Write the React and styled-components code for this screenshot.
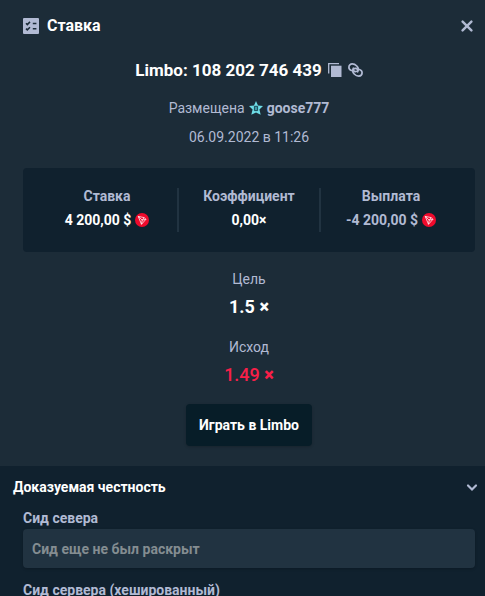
import React from "react";
import styled, { createGlobalStyle, css } from "styled-components";

const color = {
  page: "#1c2c38",
  dark: "#10212e",
  field: "#213341",
  button: "#071d28",
  muted: "#b1bad3",
  white: "#ffffff",
  red: "#f91f48",
};

const GlobalStyle = createGlobalStyle`
  *, *::before, *::after { box-sizing: border-box; }
  body {
    margin: 0;
    background: ${color.page};
    color: ${color.muted};
    font-family: Roboto, "Noto Sans", sans-serif;
    font-size: 14px;
    line-height: 20px;
  }
  button, input { font: inherit; }
  h1, h2, p, dl, dd { margin: 0; }
`;

const Modal = styled.main`
  display: flex;
  flex-direction: column;
  height: 100vh;
  overflow-y: auto;
  scrollbar-width: none;
`;

const Header = styled.header`
  display: flex;
  align-items: center;
  gap: 8px;
  padding: 14px 12px 14px 23px;
  flex-shrink: 0;
`;

const Title = styled.h1`
  flex: 1;
  font-size: 16px;
  line-height: 24px;
  font-weight: 700;
  color: ${color.white};
`;

const IconButton = styled.button`
  display: inline-flex;
  padding: 0;
  border: 0;
  background: none;
  color: ${color.muted};
  cursor: pointer;
`;

const Body = styled.section`
  display: flex;
  flex-direction: column;
  align-items: center;
  flex-shrink: 0;
  padding: 6px 10px 20px 23px;
`;

const BetId = styled.h2`
  display: flex;
  align-items: center;
  gap: 6px;
  font-size: 17px;
  line-height: 24px;
  font-weight: 700;
  color: ${color.white};
`;

const Placed = styled.p`
  display: flex;
  align-items: center;
  gap: 4px;
  margin-top: 16px;
`;

const UserLink = styled.a`
  color: ${color.muted};
  font-weight: 700;
  text-decoration: none;
`;

const Time = styled.time`
  margin-top: 9px;
`;

const Stats = styled.dl`
  display: grid;
  grid-template-columns: repeat(3, 1fr);
  align-self: stretch;
  margin-top: 21px;
  padding: 20px 13px;
  border-radius: 4px;
  background: ${color.dark};
`;

const Stat = styled.div`
  display: flex;
  flex-direction: column;
  align-items: center;
  gap: 8px;
  min-height: 44px;
  line-height: 16px;
  font-weight: 700;
  & + & {
    box-shadow: -1px 0 ${color.field}, inset 1px 0 ${color.field};
  }
`;

const StatValue = styled.dd`
  display: flex;
  align-items: center;
  gap: 4px;
  color: ${(p) => (p.$muted ? color.muted : color.white)};
`;

const Results = styled.dl`
  display: flex;
  flex-direction: column;
  gap: 18px;
  margin-top: 17px;
  text-align: center;
`;

const ResultValue = styled.dd`
  margin-top: 6px;
  font-size: 18px;
  line-height: 24px;
  font-weight: ${(p) => (p.$loss ? 500 : 700)};
  color: ${(p) => (p.$loss ? color.red : color.white)};
`;

const Times = styled.span`
  font-weight: 900;
`;

const PlayButton = styled.button`
  margin-top: 17px;
  padding: 11px 13px;
  border: 0;
  border-radius: 4px;
  background: ${color.button};
  color: ${color.white};
  font-weight: 700;
  box-shadow: 0 1px 3px rgba(0, 0, 0, 0.2);
  cursor: pointer;
`;

const Fairness = styled.section`
  flex: 1 0 auto;
  background: ${color.dark};
`;

const FairnessToggle = styled.button`
  display: flex;
  align-items: center;
  justify-content: space-between;
  width: 100%;
  padding: 11px 6px 11px 13px;
  border: 0;
  background: none;
  color: ${color.white};
  font-weight: 700;
  cursor: pointer;
`;

const Fields = styled.div`
  display: flex;
  flex-direction: column;
  gap: 12px;
  padding: 0 10px 12px 23px;
`;

const Field = styled.label`
  display: flex;
  flex-direction: column;
  gap: 1px;
  font-weight: 700;
`;

const fieldText = css`
  color: #848d91;
  opacity: 1;
`;

const SeedInput = styled.input`
  width: 100%;
  height: 39px;
  padding: 0 9px;
  border: 0;
  border-radius: 4px;
  background: ${color.field};
  box-shadow: 0 1px 3px rgba(0, 0, 0, 0.2);
  ${fieldText}
  &::placeholder { ${fieldText} }
`;

const Glyph = styled.svg`
  display: block;
  flex: none;
`;

const ChecklistIcon = () => (
  <Glyph width="16" height="16" viewBox="0 0 16 16" aria-hidden="true">
    <rect width="16" height="16" rx="1" fill={color.muted} />
    <path d="M3 5.3l1.3 1.3L7 3.9M3 10.6l1.3 1.3L7 9.2M9.8 5.5h3.6M9.8 10.8h3.6" fill="none" stroke={color.page} strokeWidth="1.5" />
  </Glyph>
);

const CloseIcon = () => (
  <Glyph width="12" height="12" viewBox="0 0 12 12" aria-hidden="true">
    <path d="M1.6 1.6l8.8 8.8M10.4 1.6l-8.800 8.800" stroke="currentColor" strokeWidth="2.4" strokeLinecap="round" />
  </Glyph>
);

const CopyIcon = () => (
  <Glyph width="14" height="14" viewBox="0 0 14 14" aria-hidden="true">
    <path d="M.7 10.5V.7H11" fill="none" stroke="currentColor" strokeWidth="1.3" />
    <rect x="3" y="2.700" width="10.500" height="11.300" fill="currentColor" />
  </Glyph>
);

const LinkIcon = () => (
  <Glyph width="15" height="14" viewBox="0 0 15 14" aria-hidden="true">
    <g fill="none" stroke="currentColor" strokeWidth="1.7" strokeLinecap="round">
      <path d="M3.5 7.5C1.9 7 .9 5.700.9 4.200.9 2.300 2.400.9 4.200.9c1.700 0 3.200.7 4.600 2.100 1.500 1.500 1.900 3.300.7 4.700-1.100 1.200-3 1.100-4-.1-.7-.8-.7-1.700-.2-2.400" />
      <path d="M11.500 6.500c1.600.5 2.600 1.800 2.600 3.300 0 1.900-1.500 3.300-3.300 3.300-1.700 0-3.200-.7-4.600-2.100C4.700 9.500 4.300 7.700 5.500 6.300c1.100-1.200 3-1.100 4 .1.700.8.7 1.700.2 2.400" />
    </g>
  </Glyph>
);

const StarIcon = () => (
  <Glyph width="14" height="14" viewBox="0 0 14 14" aria-hidden="true">
    <path d="M7 0l2 4.600 5 .4-3.600 3.500 1.300 5.200L7 11.500l-4.700 2.200 1.300-5.200L0 5l5-.4z" fill="#6fdde7" />
    <path d="M5.400 5.300h3.200v4.300H5.400z" fill="#3b9ba8" stroke="#1c4b5a" strokeWidth="1" />
  </Glyph>
);

const TronIcon = () => (
  <Glyph width="14" height="14" viewBox="0 0 14 14" role="img" aria-label="TRX">
    <circle cx="7" cy="7" r="7" fill="#f00a2c" />
    <path d="M3.200 3.400l6 1.200 1.700 1.700-4.400 5zM3.200 3.400l4 3.700 2-2.500M7.200 7.100l3.700-.8M7.200 7.100l-.7 4.200" fill="none" stroke="#fff" strokeWidth=".75" strokeLinejoin="round" />
  </Glyph>
);

const ChevronIcon = () => (
  <Glyph width="14" height="14" viewBox="0 0 14 14" aria-hidden="true">
    <path d="M3 5.500l4 4 4-4" fill="none" stroke={color.muted} strokeWidth="2.200" strokeLinecap="round" />
  </Glyph>
);

export default function App() {
  return (
    <>
      <GlobalStyle />
      <Modal>
        <Header>
          <ChecklistIcon />
          <Title>Ставка</Title>
          <IconButton type="button" aria-label="Закрыть"><CloseIcon /></IconButton>
        </Header>

        <Body>
          <BetId>
            Limbo: 108 202 746 439
            <IconButton type="button" aria-label="Копировать"><CopyIcon /></IconButton>
            <IconButton type="button" aria-label="Ссылка"><LinkIcon /></IconButton>
          </BetId>
          <Placed>
            Размещена
            <StarIcon />
            <UserLink href="#goose777">goose777</UserLink>
          </Placed>
          <Time dateTime="2022-09-06T11:26">06.09.2022 в 11:26</Time>

          <Stats>
            <Stat>
              <dt>Ставка</dt>
              <StatValue>4 200,00 $<TronIcon /></StatValue>
            </Stat>
            <Stat>
              <dt>Коэффициент</dt>
              <dd>
                <StatValue as="span">0,00×</StatValue>
              </dd>
            </Stat>
            <Stat>
              <dt>Выплата</dt>
              <StatValue $muted>-4 200,00 $<TronIcon /></StatValue>
            </Stat>
          </Stats>

          <Results>
            <div>
              <dt>Цель</dt>
              <ResultValue>1.5 <Times>×</Times></ResultValue>
            </div>
            <div>
              <dt>Исход</dt>
              <ResultValue $loss>1.49 <Times>×</Times></ResultValue>
            </div>
          </Results>

          <PlayButton type="button">Играть в Limbo</PlayButton>
        </Body>

        <Fairness>
          <FairnessToggle type="button" aria-expanded="true">
            Доказуемая честность
            <ChevronIcon />
          </FairnessToggle>
          <Fields>
            <Field>
              Сид севера
              <SeedInput readOnly placeholder="Сид еще не был раскрыт" />
            </Field>
            <Field>
              Сид сервера (хешированный)
              <SeedInput readOnly />
            </Field>
          </Fields>
        </Fairness>
      </Modal>
    </>
  );
}
